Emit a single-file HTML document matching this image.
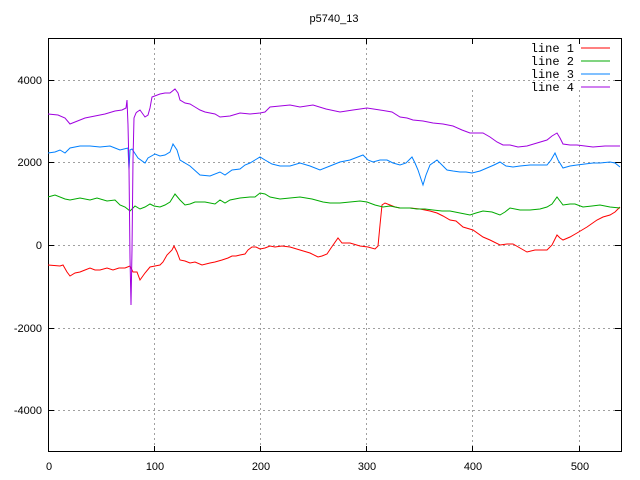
<!DOCTYPE html>
<html><head><style>
html,body{margin:0;padding:0;background:#fff;}
svg{display:block;}
text{font-family:"Liberation Sans",sans-serif;font-size:11px;fill:#000;}
.lg{font-family:"Liberation Mono",monospace;font-size:12px;}
</style></head><body>
<svg width="640" height="480" viewBox="0 0 640 480">
<g stroke="#a0a0a0" stroke-dasharray="2,3" stroke-width="1">
<line x1="154.5" y1="38" x2="154.5" y2="452"/>
<line x1="260.5" y1="38" x2="260.5" y2="452"/>
<line x1="366.5" y1="38" x2="366.5" y2="452"/>
<line x1="472.5" y1="90" x2="472.5" y2="452"/>
<line x1="579.5" y1="90" x2="579.5" y2="452"/>
<line x1="48" y1="80.5" x2="621" y2="80.5"/>
<line x1="48" y1="162.5" x2="621" y2="162.5"/>
<line x1="48" y1="245.5" x2="621" y2="245.5"/>
<line x1="48" y1="328.5" x2="621" y2="328.5"/>
<line x1="48" y1="410.5" x2="621" y2="410.5"/>
</g>
<rect x="48.5" y="38.5" width="573" height="413" fill="none" stroke="#000"/>
<g stroke="#000">
<line x1="48" y1="80.5" x2="54" y2="80.5"/><line x1="615" y1="80.5" x2="621" y2="80.5"/>
<line x1="48" y1="162.5" x2="54" y2="162.5"/><line x1="615" y1="162.5" x2="621" y2="162.5"/>
<line x1="48" y1="245.5" x2="54" y2="245.5"/><line x1="615" y1="245.5" x2="621" y2="245.5"/>
<line x1="48" y1="328.5" x2="54" y2="328.5"/><line x1="615" y1="328.5" x2="621" y2="328.5"/>
<line x1="48" y1="410.5" x2="54" y2="410.5"/><line x1="615" y1="410.5" x2="621" y2="410.5"/>
<line x1="154.5" y1="38" x2="154.5" y2="44"/><line x1="154.5" y1="446" x2="154.5" y2="452"/>
<line x1="260.5" y1="38" x2="260.5" y2="44"/><line x1="260.5" y1="446" x2="260.5" y2="452"/>
<line x1="366.5" y1="38" x2="366.5" y2="44"/><line x1="366.5" y1="446" x2="366.5" y2="452"/>
<line x1="472.5" y1="38" x2="472.5" y2="44"/><line x1="472.5" y1="446" x2="472.5" y2="452"/>
<line x1="579.5" y1="38" x2="579.5" y2="44"/><line x1="579.5" y1="446" x2="579.5" y2="452"/>
</g>
<g text-anchor="end">
<text x="42" y="84">4000</text>
<text x="42" y="166">2000</text>
<text x="42" y="249">0</text>
<text x="42" y="332">-2000</text>
<text x="42" y="414">-4000</text>
</g>
<g text-anchor="middle">
<text x="49" y="470">0</text>
<text x="155" y="470">100</text>
<text x="261" y="470">200</text>
<text x="367" y="470">300</text>
<text x="473" y="470">400</text>
<text x="580" y="470">500</text>
<text x="334" y="22">p5740_13</text>
</g>
<g text-anchor="end" class="lg">
<text class="lg" x="574" y="52">line 1</text>
<text class="lg" x="574" y="65">line 2</text>
<text class="lg" x="574" y="78">line 3</text>
<text class="lg" x="574" y="91">line 4</text>
</g>
<line x1="581" y1="48" x2="610" y2="48" stroke="#ff0000"/>
<line x1="581" y1="61" x2="610" y2="61" stroke="#00aa00"/>
<line x1="581" y1="74" x2="610" y2="74" stroke="#0080ff"/>
<line x1="581" y1="87" x2="610" y2="87" stroke="#a000e0"/>
<g fill="none" stroke-width="1">
<polyline stroke="#ff0000" points="48,265 60,266 63,265 67,272 70,276 75,273 80,272 85,270 90,268 95,270 100,270 107,268 113,270 119,268 125,268 130,266 133,272 137,272 140,280 145,273 150,267 155,266 160,265 163,262 167,255 172,250 174,246 177,252 180,260 185,261 190,263 195,262 202,265 210,263 215,262 222,260 228,258 232,256 236,256 240,255 245,254 248,250 252,247 256,247 260,249 265,248 270,246 275,247 282,246 290,247 300,250 310,253 318,257 322,256 327,254 331,248 338,238 342,243 350,243 360,246 368,247 375,249 378,246 380,225 382,205 385,203 390,205 395,207 400,208 410,208 420,209 430,211 437,213 443,216 450,220 456,221 463,227 473,230 483,237 490,240 500,245 507,244 513,244 520,248 527,252 535,250 547,250 552,245 557,235 560,238 563,240 570,237 577,233 587,227 597,220 603,217 610,215 615,212 620,207"/>
<polyline stroke="#00aa00" points="48,197 55,195 65,199 70,200 80,198 90,200 97,198 107,201 115,200 120,205 125,207 130,211 135,206 140,209 145,207 150,204 154,206 160,207 165,205 170,202 175,194 180,200 185,205 190,204 195,202 205,202 215,204 220,200 225,203 230,200 240,198 250,197 255,197 260,193 265,194 270,197 280,199 290,198 300,197 312,199 323,202 330,203 340,203 350,202 360,201 367,202 375,205 383,207 390,206 400,208 410,208 417,209 425,209 433,210 442,211 450,211 460,213 470,215 476,213 483,211 492,212 500,215 505,212 510,208 520,210 530,210 540,209 547,207 552,204 557,197 560,201 563,205 570,204 575,204 583,207 592,206 600,205 610,207 620,208"/>
<polyline stroke="#0080ff" points="48,153 55,152 60,150 65,153 70,148 80,146 90,146 100,147 110,146 115,148 120,150 128,148 129,170 130,150 132,149 138,158 145,163 148,158 155,154 160,156 165,155 170,152 173,144 177,150 180,160 190,166 200,175 210,176 220,172 225,175 232,170 240,169 245,165 250,163 255,160 260,157 265,160 272,164 280,166 290,166 300,163 310,166 320,170 330,166 340,162 350,160 363,155 368,160 373,162 380,160 387,160 393,163 400,165 406,163 412,157 415,163 418,170 423,185 426,175 430,165 437,160 442,165 447,170 453,171 460,172 466,172 472,173 480,171 487,168 494,165 500,162 506,166 513,167 520,166 530,165 540,165 547,165 551,160 555,153 558,160 563,168 570,166 577,165 585,164 593,163 600,163 610,162 615,163 620,167"/>
<polyline stroke="#a000e0" points="48,114 58,115 65,118 70,124 75,122 85,118 95,116 105,114 115,111 122,110 126,108 127,100 128,125 129,168 130,258 131,305 132,250 133,160 134,118 136,113 137,112 140,110 145,117 148,115 150,108 152,97 160,94 165,93 170,93 175,89 178,93 180,100 185,103 190,104 195,107 200,110 205,112 215,114 220,117 230,116 240,113 250,114 260,113 265,112 270,107 280,106 290,105 300,107 313,105 326,109 340,112 353,110 367,108 380,110 392,112 400,117 407,118 413,120 423,121 433,123 443,124 453,126 462,130 470,133 476,133 483,133 490,137 497,142 503,145 510,145 518,147 527,146 537,143 547,140 552,136 557,133 560,138 563,144 570,145 577,145 585,146 593,147 605,146 612,146 620,146"/>
</g>
</svg>
</body></html>
